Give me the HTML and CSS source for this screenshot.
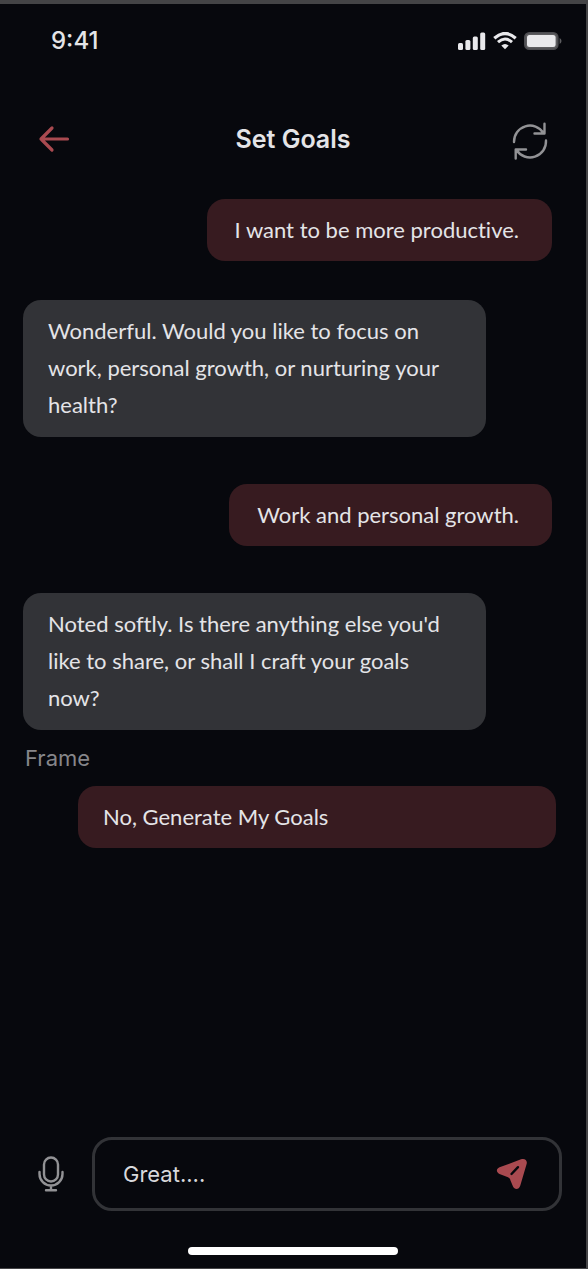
FILE: index.html
```html
<!DOCTYPE html>
<html lang="en">
<head>
<meta charset="utf-8">
<meta name="viewport" content="width=device-width, initial-scale=1">
<title>Set Goals</title>
<link rel="stylesheet" href="styles.css">
</head>
<body>
<div class="screen">
  <div class="status">
    <span class="time">9:41</span>
    <div class="indicators">
      <svg width="28" height="18" viewBox="0 0 28 18" fill="#e9e9ec" aria-hidden="true">
        <rect x="0" y="11" width="5" height="7" rx="1.5"/><rect x="7.4" y="8" width="5" height="10" rx="1.5"/><rect x="14.8" y="4.500" width="5" height="13.500" rx="1.500"/><rect x="22.200" y="0.500" width="5" height="17.500" rx="1.500"/>
      </svg>
      <svg width="24" height="18" viewBox="0 0 24 18" fill="none" stroke="#e9e9ec" aria-hidden="true">
        <path d="M1.300 6.200Q12-3.200 22.700 6.200" stroke-width="3.200"/><path d="M5 10.200Q12 3.800 19 10.200" stroke-width="3"/><path d="M8.300 13.600Q12 10.600 15.700 13.600L12 17.300Z" fill="#e9e9ec" stroke="none"/>
      </svg>
      <svg width="38" height="18" viewBox="0 0 38 18" aria-hidden="true">
        <rect x="0.800" y="0.800" width="33" height="16.400" rx="4.500" fill="#5d5d60" stroke="#4c4c50" stroke-width="1.600"/><rect x="3" y="3" width="28.600" height="12" rx="2.500" fill="#e9e9ec"/><path d="M35.600 6v6q1.900-.8 1.900-3t-1.900-3z" fill="#5d5d60"/>
      </svg>
    </div>
  </div>
  <header class="header">
    <button class="icon-button" type="button" aria-label="Back">
      <svg width="32" height="28" viewBox="0 0 32 28" fill="none" stroke="#a94a50" stroke-width="3.200" stroke-linecap="round" stroke-linejoin="round"><path d="M29.500 14H3M14 3L3 14L14 25"/></svg>
    </button>
    <h1 class="title">Set Goals</h1>
    <button class="icon-button" type="button" aria-label="Start over">
      <svg width="36" height="42" viewBox="0 -4 36 42" fill="none" stroke="#929295" stroke-width="2.400" stroke-linecap="round" stroke-linejoin="round"><path d="M2 20A16 16 0 0 1 31.500 11M32.500 1.800V11.500H22.500M34 18.500A16 16 0 0 1 4.500 28M3.700 36.500V27.500H14"/></svg>
    </button>
  </header>
  <main class="chat">
    <p class="bubble mine">I want to be more productive.</p>
    <p class="bubble theirs">Wonderful. Would you like to focus on work, personal growth, or nurturing your health?</p>
    <p class="bubble mine">Work and personal growth.</p>
    <div class="group">
      <p class="bubble theirs">Noted softly. Is there anything else you'd like to share, or shall I craft your goals now?</p>
      <p class="caption">Frame</p>
      <button class="bubble suggestion" type="button">No, Generate My Goals</button>
    </div>
  </main>
  <form class="composer">
    <button class="icon-button" type="button" aria-label="Record voice">
      <svg width="26" height="36" viewBox="0 0 26 36" fill="none" stroke="#929295" stroke-width="2.400" stroke-linecap="round"><rect x="6" y="1.500" width="14" height="24" rx="7"/><path d="M1.500 16v2a11.500 11.500 0 0 0 23 0v-2M13 29.500V34M8 34.300h10" /></svg>
    </button>
    <div class="field">
      <input class="field-input" type="text" value="Great...." aria-label="Message">
      <button class="icon-button" type="submit" aria-label="Send">
        <svg width="32" height="32" viewBox="0 0 32 32"><path d="M3.500 9.300L25 1.300C28.800 0 31.500 2.300 30.700 5.800L24.300 27.500C23 32 18.500 32 17 28.500L14.500 22.500C14 20.500 13.500 20 12 19.200L3.500 16C0 14 0 10.800 3.500 9.300Z" fill="#a94a50"/><path d="M15.500 16L22 9.200" stroke="#07080d" stroke-width="2.400" stroke-linecap="round"/></svg>
      </button>
    </div>
  </form>
  <div class="home-bar"></div>
</div>
</body>
</html>
```
FILE: styles.css
```css
* { box-sizing: border-box; }
body { margin: 0; background: #07080d; }
.screen {
  display: flex;
  flex-direction: column;
  min-height: 100vh;
  border: solid #444446;
  border-width: 4px 2px 1px 0;
  background: #07080d;
  color: #e4e4e7;
  font-family: Inter, sans-serif;
}
.status {
  display: flex;
  align-items: center;
  justify-content: space-between;
  height: 73px;
  padding: 0 24px 0 51px;
}
.time { font-size: 24px; font-weight: 500; }
.indicators { display: flex; gap: 7px; }
.header {
  display: grid;
  grid-template-columns: 1fr auto 1fr;
  align-items: center;
  height: 122px;
  padding: 1px 38px 0;
}
.header .icon-button:last-child { justify-self: end; }
.title { margin: 0; font-size: 25px; font-weight: 600; line-height: 32px; }
.icon-button {
  display: flex;
  flex: none;
  padding: 0;
  border: 0;
  background: none;
}
.chat {
  display: flex;
  flex: 1;
  flex-direction: column;
  gap: 47px;
  padding: 0 34px 0 23px;
}
.bubble {
  margin: 0;
  padding: 12px 25px 13px;
  border: 0;
  border-radius: 18px;
  color: #e4e4e7;
  font-family: Lato, sans-serif;
  font-size: 22px;
  font-variant-ligatures: none;
  line-height: 37px;
  text-align: left;
}
.mine { align-self: flex-end; padding-right: 33px; padding-left: 28px; background: #371b20; }
.mine:first-child { margin-bottom: -8px; }
.theirs { width: 87.5%; padding-bottom: 14px; background: #323337; }
.group { display: flex; flex-direction: column; }
.caption { margin: 13px 2px; color: #86868a; font-size: 22px; line-height: 30px; }
.suggestion { margin: 0 -4px 0 55px; background: #371b20; }
.composer {
  display: flex;
  align-items: center;
  gap: 28px;
  padding: 0 24px 0 38px;
}
.field {
  display: flex;
  flex: 1;
  align-items: center;
  height: 74px;
  padding: 0 31px 0 28px;
  border: 3px solid #323337;
  border-radius: 20px;
}
.field-input {
  flex: 1;
  min-width: 0;
  padding: 0;
  border: 0;
  outline: 0;
  background: none;
  color: #d8d8dc;
  font-family: Inter, sans-serif;
  font-size: 22px;
}
.home-bar {
  align-self: center;
  width: 36%;
  height: 8px;
  margin: 36px 0 13px;
  border-radius: 4px;
  background: #fff;
}
```
